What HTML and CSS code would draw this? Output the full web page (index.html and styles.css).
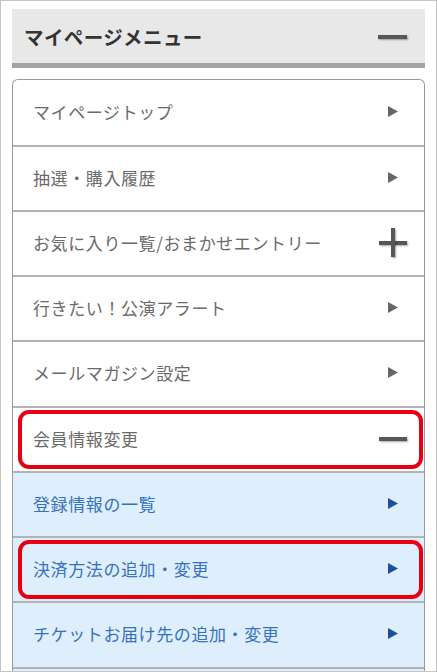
FILE: index.html
```html
<!DOCTYPE html>
<html lang="ja">
<head>
  <meta charset="UTF-8" />
  <title>マイページメニュー</title>
  <meta name="viewport" content="width=device-width, initial-scale=1.0">
  <link rel="stylesheet" href="styles.css">
</head>
<body>

  <div class="page">
    <div class="menu-head">
      <span>マイページメニュー</span>
      <span class="icon"><i class="bar"></i></span>
    </div>

    <ul class="menu">
      <li class="item">
        <span>マイページトップ</span>
        <span class="icon"><svg width="10" height="11" viewBox="0 0 10 11"><polygon points="0,0 10,5.5 0,11" /></svg></span>
      </li>
      <li class="item">
        <span>抽選・購入履歴</span>
        <span class="icon"><svg width="10" height="11" viewBox="0 0 10 11"><polygon points="0,0 10,5.5 0,11" /></svg></span>
      </li>
      <li class="item">
        <span>お気に入り一覧/おまかせエントリー</span>
        <span class="icon"><i class="bar"></i><i class="bar vertical"></i></span>
      </li>
      <li class="item">
        <span>行きたい！公演アラート</span>
        <span class="icon"><svg width="10" height="11" viewBox="0 0 10 11"><polygon points="0,0 10,5.5 0,11" /></svg></span>
      </li>
      <li class="item">
        <span>メールマガジン設定</span>
        <span class="icon"><svg width="10" height="11" viewBox="0 0 10 11"><polygon points="0,0 10,5.5 0,11" /></svg></span>
      </li>
      <li class="item marked">
        <span>会員情報変更</span>
        <span class="icon"><i class="bar"></i></span>
      </li>
      <li class="item sub">
        <span>登録情報の一覧</span>
        <span class="icon"><svg width="10" height="11" viewBox="0 0 10 11"><polygon points="0,0 10,5.5 0,11" /></svg></span>
      </li>
      <li class="item sub marked">
        <span>決済方法の追加・変更</span>
        <span class="icon"><svg width="10" height="11" viewBox="0 0 10 11"><polygon points="0,0 10,5.5 0,11" /></svg></span>
      </li>
      <li class="item sub">
        <span>チケットお届け先の追加・変更</span>
        <span class="icon"><svg width="10" height="11" viewBox="0 0 10 11"><polygon points="0,0 10,5.5 0,11" /></svg></span>
      </li>
      <li class="item sub"></li>
    </ul>
  </div>

</body>
</html>
```

FILE: styles.css
```css
* {
  box-sizing: border-box;
}

body {
  margin: 0;
  font-family: "Noto Sans CJK JP", "Noto Sans", sans-serif;
  background: #ffffff;
}

.page {
  width: 437px;
  height: 672px;
  overflow: hidden;
  border: 1px solid #c4c4c4;
  padding: 8px 11px 0 11px;
}

.menu-head {
  display: flex;
  align-items: center;
  justify-content: space-between;
  height: 59px;
  padding: 0 18px 0 12px;
  background: #e8e8e8;
  border-bottom: 5px solid #a3a3a3;
  font-size: 19.5px;
  font-weight: bold;
  letter-spacing: 0.4px;
  color: #333;
}

.menu-head .icon {
  width: 29px;
}

.menu {
  list-style: none;
  margin: 11px 0 0;
  padding: 0;
  border: 1px solid #999;
  border-bottom: none;
  border-radius: 6px 6px 0 0;
  overflow: hidden;
}

.item {
  position: relative;
  display: flex;
  align-items: center;
  justify-content: space-between;
  height: 65.25px;
  padding: 0 17px 2px 20px;
  border-top: 2px solid #b3b3b3;
  font-size: 17px;
  letter-spacing: 0.6px;
  color: #6a6a6a;
}

.item:first-child {
  border-top: none;
  height: 64.5px;
}

.icon {
  position: relative;
  display: flex;
  align-items: center;
  justify-content: center;
  width: 28px;
  height: 29px;
}

.icon svg {
  fill: #666;
}

.bar {
  position: absolute;
  left: 0;
  top: 13px;
  width: 100%;
  height: 4px;
  background: #575757;
  box-shadow: 1px 1px 2px rgba(0, 0, 0, 0.35);
}

.bar.vertical {
  left: 12px;
  top: 0;
  width: 4px;
  height: 100%;
}

.sub {
  background: #dfeefd;
  color: #3572bd;
}

.sub .icon svg {
  fill: #1d4f9c;
}

.marked::after {
  content: "";
  position: absolute;
  top: 2px;
  bottom: 2px;
  left: 5px;
  right: 1px;
  border: 4px solid #e60012;
  border-radius: 11px;
}
```
